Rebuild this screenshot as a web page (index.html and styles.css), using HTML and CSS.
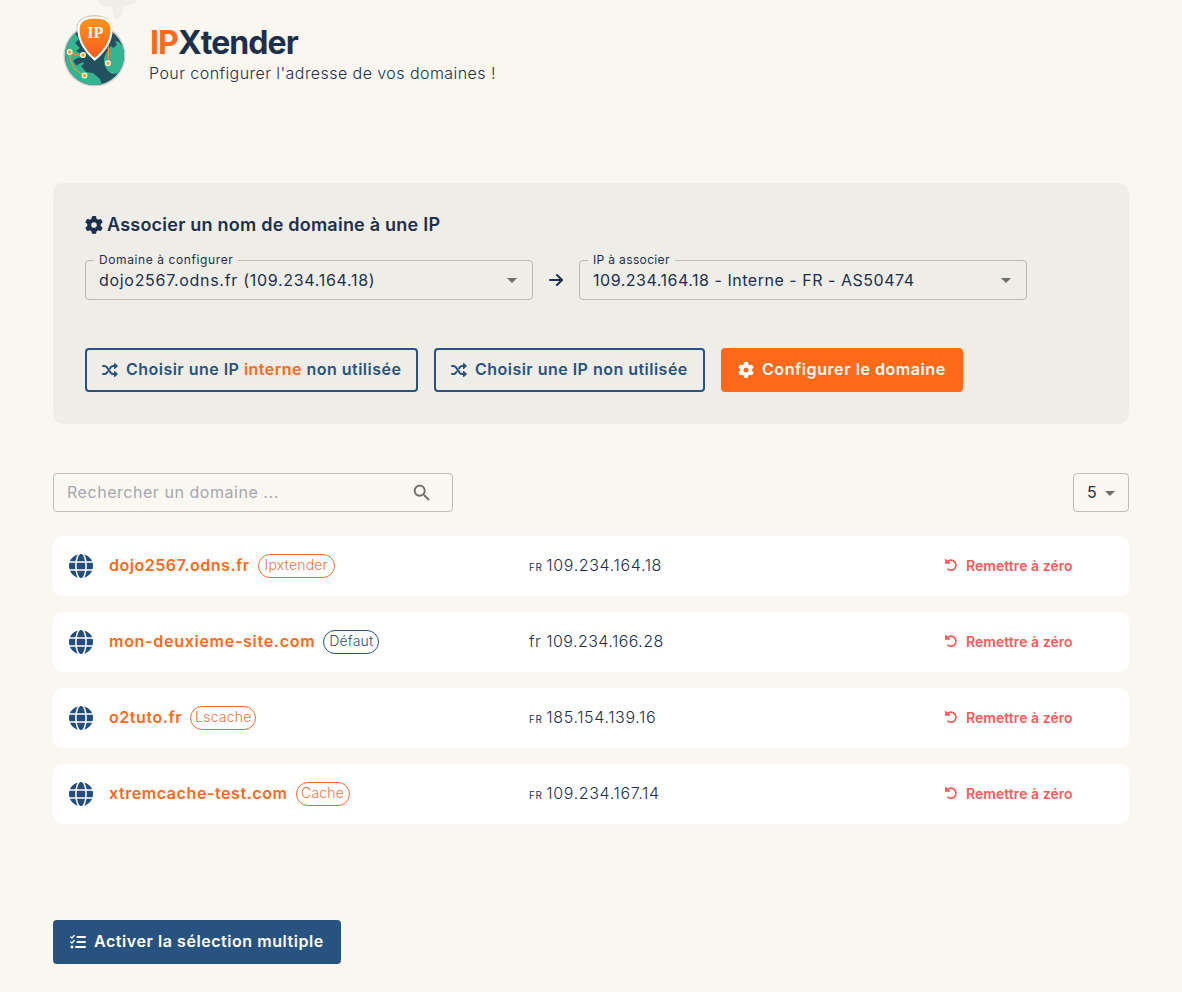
FILE: index.html
```
<!DOCTYPE html>
<html lang="fr">
<head>
<meta charset="utf-8">
<title>IPXtender</title>
<link rel="stylesheet" href="styles.css">
</head>
<body>
<svg class="defs" width="0" height="0">
  <symbol id="gear" viewBox="0 0 512 512"><path fill="currentColor" d="M495.9 166.6c3.2 8.7 .5 18.4-6.4 24.6l-43.3 39.4c1.1 8.3 1.7 16.8 1.7 25.4s-.6 17.1-1.7 25.4l43.3 39.4c6.9 6.2 9.6 15.9 6.4 24.6c-4.4 11.9-9.7 23.3-15.8 34.3l-4.7 8.1c-6.6 11-14 21.4-22.1 31.2c-5.9 7.2-15.7 9.6-24.5 6.8l-55.7-17.7c-13.4 10.3-28.2 18.9-44 25.4l-12.5 57.1c-2 9.1-9 16.3-18.2 17.8c-13.8 2.3-28 3.5-42.5 3.5s-28.7-1.2-42.5-3.5c-9.2-1.5-16.2-8.7-18.2-17.8l-12.5-57.1c-15.8-6.5-30.6-15.1-44-25.4L83.1 425.9c-8.8 2.8-18.6 .3-24.5-6.8c-8.1-9.8-15.5-20.2-22.1-31.2l-4.7-8.1c-6.1-11-11.4-22.4-15.8-34.3c-3.2-8.7-.5-18.4 6.4-24.6l43.3-39.4C64.6 273.1 64 264.6 64 256s.6-17.1 1.7-25.4L22.4 191.2c-6.9-6.2-9.6-15.9-6.4-24.6c4.4-11.9 9.7-23.3 15.8-34.3l4.7-8.1c6.6-11 14-21.4 22.1-31.2c5.9-7.2 15.7-9.6 24.5-6.8l55.7 17.7c13.4-10.3 28.2-18.9 44-25.4l12.5-57.1c2-9.1 9-16.3 18.2-17.8C227.3 1.2 241.5 0 256 0s28.7 1.2 42.5 3.5c9.2 1.5 16.2 8.7 18.2 17.8l12.5 57.1c15.8 6.5 30.6 15.1 44 25.4l55.7-17.7c8.8-2.8 18.6-.3 24.5 6.8c8.1 9.8 15.5 20.2 22.1 31.2l4.7 8.1c6.1 11 11.4 22.4 15.8 34.3zM256 336a80 80 0 1 0 0-160 80 80 0 1 0 0 160z"/></symbol>
  <symbol id="shuffle" viewBox="0 0 16 16"><g fill="none" stroke="currentColor" stroke-width="2" stroke-linecap="round"><path d="M1 4h1.5c1 0 1.700.4 2.300 1.200l4 5.600c.6.8 1.300 1.200 2.300 1.200H13M1 12h1.500c1 0 1.700-.4 2.300-1.200l.7-1M8.200 6.200l.6-1C9.400 4.400 10.100 4 11.100 4H13"/></g><path fill="currentColor" d="M12 1.600c0-.6.7-.8 1.100-.4l2.500 2.300c.3.3.3.7 0 1l-2.500 2.300c-.4.4-1.100.2-1.100-.4zM12 9.600c0-.6.7-.8 1.100-.4l2.500 2.300c.3.3.3.7 0 1l-2.500 2.300c-.4.4-1.100.2-1.100-.4z"/></symbol>
  <symbol id="caret" viewBox="0 0 24 24"><path fill="#6d6d6b" d="M7 10l5 5 5-5z"/></symbol>
  <symbol id="globe" viewBox="0 0 24 24"><circle cx="12" cy="12" r="12" fill="#224d7c"/><g fill="none" stroke="#fff" stroke-width="1.500"><ellipse cx="12" cy="12" rx="5.100" ry="13"/><path d="M0 8h24M0 16h24"/></g></symbol>
  <symbol id="undo" viewBox="0 0 14 14"><path fill="none" stroke="currentColor" stroke-width="1.700" stroke-linecap="round" d="M2.600 4.700A5 5 0 1 1 4 11.200"/><path fill="currentColor" d="M1 1.300c0-.5.600-.700 1-.4l4 3.900c.4.400.100 1-.4 1H1.600c-.4 0-.6-.3-.6-.6z"/></symbol>
</svg>
<main class="page">
  <header class="header">
    <svg class="logo" viewBox="0 0 100 100">
      <defs>
        <linearGradient id="pin" x1="0" y1="0" x2="0" y2="1"><stop offset="0" stop-color="#ff941b"/><stop offset="1" stop-color="#f6591f"/></linearGradient>
        <clipPath id="earth"><circle cx="44.500" cy="55.500" r="29.500"/></clipPath>
      </defs>
      <path fill="#efede6" d="M48 0h38c1 4-5 5-11 5-2 2-2 5-3 9-2 7-7 7-9 0 0-5-1-8-4-8-5 1-10-1-11-6z"/>
      <circle cx="44.500" cy="55.500" r="31" fill="#c9cccc"/>
      <path d="M26.500 27c1-8 9-12 18-12s17 4 18 12c1 10-4 16-8 20H36c-5-5-10-11-9.500-20z" fill="#c9cccc"/>
      <circle cx="44.500" cy="55.500" r="29.500" fill="#23505f"/>
      <g clip-path="url(#earth)" fill="#35b491">
        <path d="M14 42l10-10 5 7-4 4 5 5-4 3 6 3 5-2-3 5-7 1-4 3 3 4 5 1 5 6 7 1 7 6 2 7-8 3-16-5-12-16z"/>
        <path d="M54 60c0-5 3-7 4-11l3-3 2 2 4-3-2-4 4 1 8 10 1 12-8 9-8 1c-5-3-8-8-8-14z"/>
        <path d="M27 65l6-3 1 2-5 3z"/>
      </g>
      <g fill="none" stroke="#ef9825" stroke-width="1.200"><path d="M19 52c2 14 6 19 15 23M19 52c5 3 8 4 14 3M58 63c1-6 1-11 0-18"/></g>
      <g fill="#ff9b25" stroke="#fff4d9" stroke-width="1.300"><circle cx="19.700" cy="52" r="2.300"/><circle cx="33" cy="55" r="2.300"/><circle cx="58" cy="63.300" r="2.300"/><circle cx="34.500" cy="75.500" r="2.300"/></g>
      <path d="M44.700 59.500C37 53 28.500 42 28.500 29.500c0-9 7-12 16.200-12s16.800 3 16.800 12c0 12.500-9 23.500-16.800 30z" fill="url(#pin)" stroke="#fff" stroke-width="2.200"/>
      <text x="45.300" y="37.700" text-anchor="middle" class="logo-text">IP</text>
    </svg>
    <div class="brand">
      <h1><span class="accent">IP</span>Xtender</h1>
      <p>Pour configurer l'adresse de vos domaines !</p>
    </div>
  </header>

  <section class="panel">
    <h2><svg width="18" height="18"><use href="#gear"/></svg><span>Associer un nom de domaine à une IP</span></h2>
    <div class="selects">
      <div class="select"><span class="label label-domain">Domaine à configurer</span><span class="value value-domain">dojo2567.odns.fr (109.234.164.18)</span><svg width="24" height="24"><use href="#caret"/></svg></div>
      <svg class="arrow" width="14" height="14" viewBox="0 0 14 14"><path fill="none" stroke="#1c304e" stroke-width="2" stroke-linecap="round" stroke-linejoin="round" d="M1 7h11.500M8 2l5 5-5 5"/></svg>
      <div class="select"><span class="label label-ip">IP à associer</span><span class="value value-ip">109.234.164.18 - Interne - FR - AS50474</span><svg width="24" height="24"><use href="#caret"/></svg></div>
    </div>
    <div class="actions">
      <button class="btn outline btn-internal"><svg width="18" height="16"><use href="#shuffle"/></svg><span>Choisir une IP <span class="accent">interne</span> non utilisée</span></button>
      <button class="btn outline btn-any"><svg width="18" height="16"><use href="#shuffle"/></svg><span>Choisir une IP non utilisée</span></button>
      <button class="btn primary"><svg width="16" height="16"><use href="#gear"/></svg><span>Configurer le domaine</span></button>
    </div>
  </section>

  <div class="toolbar">
    <div class="search"><span>Rechercher un domaine ...</span><svg width="22" height="22" viewBox="0 0 24 24"><path fill="#6d6d6b" d="M15.500 14h-.79l-.28-.27C15.410 12.590 16 11.110 16 9.500 16 5.910 13.090 3 9.500 3S3 5.910 3 9.500 5.910 16 9.500 16c1.610 0 3.090-.59 4.230-1.570l.27.28v.79l5 4.990L20.490 19l-4.990-5zm-6 0C7.010 14 5 11.990 5 9.500S7.010 5 9.500 5 14 7.010 14 9.500 11.990 14 9.500 14z"/></svg></div>
    <div class="page-size"><span>5</span><svg width="24" height="24"><use href="#caret"/></svg></div>
  </div>

  <div class="rows">
    <div class="row"><svg width="24" height="24"><use href="#globe"/></svg><div class="domain"><span class="name n1">dojo2567.odns.fr</span><span class="badge b1">Ipxtender</span></div><div class="ip"><small>FR</small><span class="addr">109.234.164.18</span></div><div class="reset"><svg width="14" height="14"><use href="#undo"/></svg><span>Remettre à zéro</span></div></div>
    <div class="row"><svg width="24" height="24"><use href="#globe"/></svg><div class="domain"><span class="name n2">mon-deuxieme-site.com</span><span class="badge navy b2">Défaut</span></div><div class="ip"><span class="addr plain">fr 109.234.166.28</span></div><div class="reset"><svg width="14" height="14"><use href="#undo"/></svg><span>Remettre à zéro</span></div></div>
    <div class="row"><svg width="24" height="24"><use href="#globe"/></svg><div class="domain"><span class="name n3">o2tuto.fr</span><span class="badge b3">Lscache</span></div><div class="ip"><small>FR</small><span class="addr">185.154.139.16</span></div><div class="reset"><svg width="14" height="14"><use href="#undo"/></svg><span>Remettre à zéro</span></div></div>
    <div class="row"><svg width="24" height="24"><use href="#globe"/></svg><div class="domain"><span class="name n4">xtremcache-test.com</span><span class="badge b4">Cache</span></div><div class="ip"><small>FR</small><span class="addr">109.234.167.14</span></div><div class="reset"><svg width="14" height="14"><use href="#undo"/></svg><span>Remettre à zéro</span></div></div>
  </div>

  <button class="btn multi"><svg width="16" height="16" viewBox="0 0 16 16"><g fill="none" stroke="#fff" stroke-linecap="round" stroke-linejoin="round"><path stroke-width="1.300" d="M.8 3l1.100 1.100L4.200 1.500M.8 8l1.100 1.100L4.200 6.500"/><path stroke-width="2" d="M7.500 3H15M7.500 8H15M6 13h9"/></g><circle cx="2" cy="13" r="1.400" fill="#fff"/></svg><span>Activer la sélection multiple</span></button>
</main>
</body>
</html>
```
FILE: styles.css
```
* { box-sizing: border-box; }
body {
  margin: 0;
  background: #faf7f0;
  color: #1c304e;
  font-family: Inter, "Liberation Sans", sans-serif;
  font-size: 16px;
}
.defs { position: absolute; }
.page { padding: 0 53px 28px; height: 992px; overflow: hidden; white-space: nowrap; }
h1, h2, p { margin: 0; }
svg { display: block; flex: none; }
.accent { color: #ff6a1a; }

.header { display: flex; height: 183px; margin-left: -3px; }
.logo { width: 100px; height: 100px; }
.logo-text { font: bold 16px "Liberation Serif", serif; fill: #fff; }
.brand { padding-top: 23px; }
h1 { font-size: 32px; line-height: 40px; font-weight: 700; letter-spacing: -0.9px; }
.brand p { font-size: 16px; line-height: 20px; font-weight: 300; letter-spacing: 0.44px; margin-left: -1px; }

.panel { height: 241px; border-radius: 10px; background: #eeede7; padding: 32px; }
h2 { display: flex; align-items: center; gap: 4px; height: 20px; font-size: 18px; font-weight: 600; letter-spacing: 0.23px; }
h2 span { padding-bottom: 2px; }
.selects { display: flex; align-items: center; margin-top: 25px; }
.select {
  position: relative;
  display: flex;
  align-items: center;
  justify-content: space-between;
  width: 448px;
  height: 40px;
  padding: 0 8px 0 13px;
  border: 1px solid #b9b9b5;
  border-radius: 4px;
}
.value-domain { letter-spacing: 0.7px; }
.value-ip { letter-spacing: 0.52px; }
.label {
  position: absolute;
  top: -9px;
  left: 8px;
  padding: 0 5px;
  background: #eeede7;
  font-size: 12px;
  line-height: 16px;
}
.label-domain { letter-spacing: 0.6px; }
.label-ip { letter-spacing: 0.35px; }
.arrow { margin: 0 16px; }
.actions { display: flex; gap: 16px; margin-top: 48px; }
.btn {
  display: flex;
  align-items: center;
  gap: 8px;
  height: 44px;
  padding: 0 0 0 17px;
  border: 0;
  border-radius: 4px;
  color: #fff;
  font: 600 16px Inter, "Liberation Sans", sans-serif;
  letter-spacing: 0.56px;
  white-space: nowrap;
}
.btn > span { padding-bottom: 2px; }
.outline { border: 2px solid #285380; padding-left: 14px; gap: 7px; background: transparent; color: #285380; letter-spacing: 0.48px; }
.btn-internal { width: 333px; }
.btn-any { width: 271px; }
.primary { width: 242px; background: #ff6a1a; }

.toolbar { display: flex; justify-content: space-between; margin-top: 49px; }
.search, .page-size {
  display: flex;
  align-items: center;
  justify-content: space-between;
  height: 39px;
  border: 1px solid #bebcb7;
  border-radius: 4px;
}
.search { width: 400px; padding: 0 19px 0 13px; color: #a3a8af; letter-spacing: 0.54px; }
.page-size { width: 56px; padding: 0 6px 0 13px; }
.search span, .page-size span { padding-bottom: 2px; }

.rows { display: grid; gap: 16px; margin-top: 24px; }
.row {
  display: grid;
  grid-template-columns: 24px 404px 400px 1fr;
  column-gap: 16px;
  align-items: center;
  height: 60px;
  padding: 0 16px;
  border-radius: 10px;
  background: #fff;
}
.domain { display: flex; align-items: center; gap: 8px; }
.name { padding-bottom: 2px; color: #ff6a1a; font-weight: 600; letter-spacing: 0.53px; }
.n2 { letter-spacing: 0.72px; }
.n3 { letter-spacing: 0.58px; }
.n4 { letter-spacing: 0.58px; }
.badge {
  display: flex;
  justify-content: center;
  height: 24px;
  border: 1px solid #f0692e;
  border-radius: 12px;
  color: #ec7447;
  font-size: 14px;
  font-weight: 300;
  line-height: 19px;
  letter-spacing: 0.2px;
}
.navy { border-color: #285380; color: #285380; }
.b1 { width: 77px; }
.b2 { width: 56px; }
.b3 { width: 66px; }
.b4 { width: 54px; }
.ip { display: flex; align-items: baseline; gap: 4px; padding-bottom: 2px; font-weight: 300; }
.ip small { font-size: 10px; font-weight: 400; letter-spacing: 0.5px; }
.addr { letter-spacing: 0.64px; }
.plain { letter-spacing: 0.46px; }
.reset { display: flex; align-items: center; gap: 8px; color: #fa5c5c; font-size: 14px; font-weight: 600; padding-bottom: 1px; margin-left: -1px; letter-spacing: 0.05px; }
.reset svg { margin-bottom: 1px; }
.reset span { padding-bottom: 1px; }

.multi { margin-top: 96px; width: 288px; background: #285380; }
```
